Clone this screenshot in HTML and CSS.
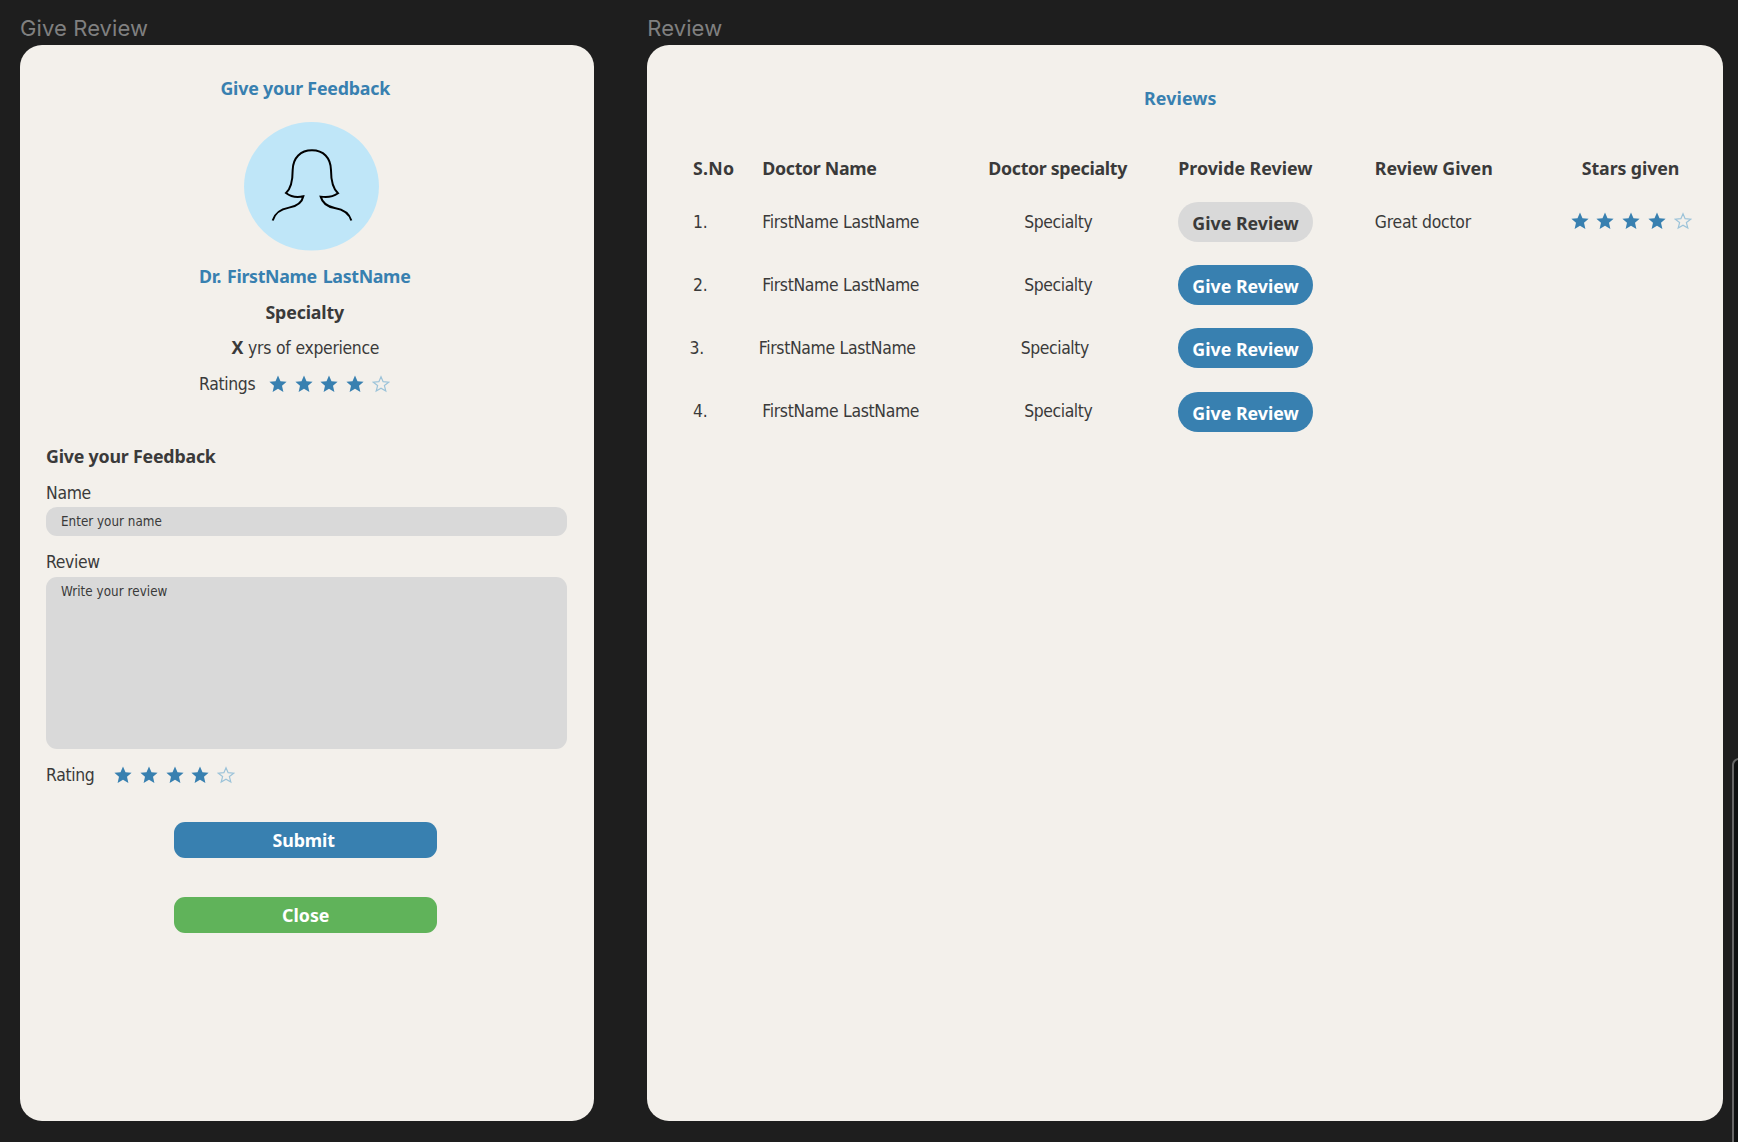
FILE: index.html
```html
<!DOCTYPE html>
<html lang="en">
<head>
<meta charset="utf-8">
<title>Give Review</title>
<link rel="stylesheet" href="styles.css">
</head>
<body>
<svg class="defs" width="0" height="0" aria-hidden="true">
  <symbol id="star" viewBox="0 0 18 18"><path d="M9 0.4 L11.5 6.2 L17.6 6.7 L13 10.8 L14.4 17 L9 13.7 L3.6 17 L5 10.8 L0.4 6.7 L6.5 6.2 Z"/></symbol>
  <symbol id="star-off" viewBox="0 0 18 18"><path d="M9 1.7 L11.1 6.7 L16.7 7.2 L12.4 10.6 L13.8 16.1 L9 13.2 L4.2 16.1 L5.6 10.6 L1.3 7.2 L6.9 6.7 Z"/></symbol>
</svg>
<main class="canvas">
  <section class="frame frame-form">
    <h2 class="frame-label">Give Review</h2>
    <div class="panel form">
      <h1 class="title form-title">Give your Feedback</h1>
      <svg class="avatar" viewBox="192 36 405 386">
        <ellipse cx="394.5" cy="229" rx="202.5" ry="193" fill="#bfe6f8"/>
        <path d="M278 332C284 309 305 297 327 293C351 289 366 278 370 259C352 263 332 260 318 249C336 233 338 205 338 180C339 143 362 121 396 121C430 121 452 143 453 180C453 205 456 233 474 250C460 260 440 263 422 260C427 278 441 290 464 294C488 298 508 310 514 332" fill="none" stroke="#000" stroke-width="6"/>
      </svg>
      <p class="line doctor">Dr. FirstName LastName</p>
      <p class="line specialty">Specialty</p>
      <p class="line experience"><b>X</b> yrs of experience</p>
      <div class="line ratings"><span class="ratings-label">Ratings</span>
        <span class="stars"><svg><use href="#star"/></svg><svg><use href="#star"/></svg><svg><use href="#star"/></svg><svg><use href="#star"/></svg><svg class="off"><use href="#star-off"/></svg></span>
      </div>
      <h3 class="form-heading">Give your Feedback</h3>
      <label class="label label-name">Name</label>
      <div class="field field-name">Enter your name</div>
      <label class="label label-review">Review</label>
      <div class="field field-review">Write your review</div>
      <div class="rating"><span class="rating-label">Rating</span>
        <span class="stars"><svg><use href="#star"/></svg><svg><use href="#star"/></svg><svg><use href="#star"/></svg><svg><use href="#star"/></svg><svg class="off"><use href="#star-off"/></svg></span>
      </div>
      <div class="button submit">Submit</div>
      <div class="button close">Close</div>
    </div>
  </section>
  <section class="frame frame-list">
    <h2 class="frame-label">Review</h2>
    <div class="panel list">
      <h1 class="title list-title">Reviews</h1>
      <div class="row head">
        <span class="h-no">S.No</span><span class="h-name">Doctor Name</span><span class="h-spec">Doctor specialty</span><span class="h-provide">Provide Review</span><span class="h-given">Review Given</span><span class="h-stars">Stars given</span>
      </div>
      <div class="row">
        <span class="no">1.</span><span class="name">FirstName LastName</span><span class="spec">Specialty</span><span class="pill done">Give Review</span><span class="comment">Great doctor</span>
        <span class="stars"><svg><use href="#star"/></svg><svg><use href="#star"/></svg><svg><use href="#star"/></svg><svg><use href="#star"/></svg><svg class="off"><use href="#star-off"/></svg></span>
      </div>
      <div class="row"><span class="no">2.</span><span class="name">FirstName LastName</span><span class="spec">Specialty</span><span class="pill">Give Review</span></div>
      <div class="row shifted"><span class="no">3.</span><span class="name">FirstName LastName</span><span class="spec">Specialty</span><span class="pill">Give Review</span></div>
      <div class="row"><span class="no">4.</span><span class="name">FirstName LastName</span><span class="spec">Specialty</span><span class="pill">Give Review</span></div>
    </div>
  </section>
  <div class="next-frame"></div>
</main>
</body>
</html>
```
FILE: styles.css
```css
* { box-sizing: border-box; margin: 0; padding: 0; }
body {
  background: #1e1e1e;
  color: #3a3a3a;
  font: 17.8px/24px "Noto Sans", "Open Sans", sans-serif;
  overflow: hidden;
}
.defs { display: block; height: 0; }
.canvas {
  position: relative;
  display: flex;
  gap: 53.8px;
  width: 1738px;
  height: 1142px;
  padding: 14px 0 0 20px;
  overflow: hidden;
}
.frame-label {
  height: 30.5px;
  color: #808080;
  font: 400 22px/28px "Inter", sans-serif;
  letter-spacing: 0.1px;
}
.frame-form { width: 573.5px; }
.frame-list { width: 1076px; }
.panel {
  height: 1076px;
  background: #f3f0eb;
  border-radius: 22px;
}
.title { color: #3880b0; font-size: 17.8px; line-height: 24px; font-weight: 700; white-space: nowrap; }
.form {
  display: flex;
  flex-direction: column;
  padding: 31.5px 27px 0 26px;
}
.form-title, .form-heading { letter-spacing: -0.2px; }
.form-title { align-self: center; margin-right: 2px; }
.avatar { width: 135px; height: 128.6px; margin-top: 22px; margin-left: 198px; }
.line { height: 36px; line-height: 36px; white-space: nowrap; align-self: center; }
.doctor { margin-top: 7.4px; margin-right: 3px; color: #3880b0; font-weight: 700; letter-spacing: -0.32px; word-spacing: 1.5px; }
.specialty { margin-right: 3px; font-weight: 700; letter-spacing: -0.15px; }

.experience, .ratings-label, .label, .field, .rating-label, .no, .name, .spec, .comment {
  font-family: "DejaVu Sans Condensed", "DejaVu Sans", sans-serif;
  font-stretch: condensed;
  font-size: 17.4px;
  letter-spacing: -0.32px;
}
.experience { line-height: 36px; margin-right: 2px; word-spacing: 0.4px; }
.experience b { font-family: "Noto Sans", sans-serif; font-size: 17.8px; line-height: 24px; }
.ratings { display: flex; align-items: center; width: 214.5px; }
.ratings-label { width: 69.8px; line-height: 24px; padding-top: 1px; }
.stars { display: flex; align-items: center; gap: 7.8px; }
.stars svg { width: 18px; height: 18px; fill: #3880b0; flex: none; }
.stars .off { fill: none; stroke: #9cc3d9; stroke-width: 1.2; }
.form-heading { margin-top: 42px; font-size: 17.8px; line-height: 24px; align-self: flex-start; }
.label { display: block; height: 24px; line-height: 26px; align-self: flex-start; }
.label-name { margin-top: 12px; }
.label-review { margin-top: 13px; }
.field {
  padding-left: 15px;
  background: #d9d9d9;
  border-radius: 11px;
  font-size: 13.3px;
  line-height: 30px;
  letter-spacing: 0.02px;
}
.field-name { height: 29px; margin-top: 3px; }
.field-review { height: 172px; margin-top: 4px; letter-spacing: 0.05px; }
.rating { display: flex; align-items: center; height: 24px; margin-top: 14px; }
.rating-label { width: 68px; padding-top: 1px; }
.button {
  width: 263px;
  height: 35.6px;
  margin-right: 1px;
  padding-right: 4px;
  align-self: center;
  border-radius: 11px;
  color: #fff;
  font-weight: 700;
  line-height: 36px;
  text-align: center;
}
.submit { margin-top: 35px; background: #3880b0; letter-spacing: -0.1px; }
.close { margin-top: 39.5px; padding-right: 0; background: #60b35a; }
.list { padding: 41.5px 0 0 45.8px; }
.list-title { margin-left: 451px; margin-bottom: 46px; letter-spacing: 0.1px; }
.row {
  display: grid;
  grid-template-columns: 69.2px 226px 190px 196.5px 195px 1fr;
  align-items: center;
  height: 63.1px;
  white-space: nowrap;
}
.head { height: 24px; margin-bottom: 9.7px; font-weight: 700; }
.h-no { letter-spacing: 0.2px; }
.h-name, .h-spec { letter-spacing: -0.32px; }
.h-stars { padding-left: 12px; letter-spacing: -0.1px; }
.no, .name, .spec, .comment { padding-top: 1px; }
.comment { letter-spacing: -0.22px; }
.spec { padding-left: 36px; letter-spacing: -0.42px; }
.row .stars { padding-left: 0.8px; }
.shifted .no, .shifted .name, .shifted .spec { margin-left: -3.5px; }
.pill {
  width: 134.5px;
  height: 40px;
  margin-top: 2px;
  border-radius: 20px;
  background: #3880b0;
  color: #fff;
  font-weight: 700;
  line-height: 42px;
  text-align: center;
}
.pill.done { background: #d9d9d9; color: #3a3a3a; }
.next-frame {
  position: absolute;
  left: 1732px;
  top: 758px;
  width: 40px;
  height: 420px;
  border: 2px solid #666;
  border-radius: 7px;
  background: #0e1010;
}
```
